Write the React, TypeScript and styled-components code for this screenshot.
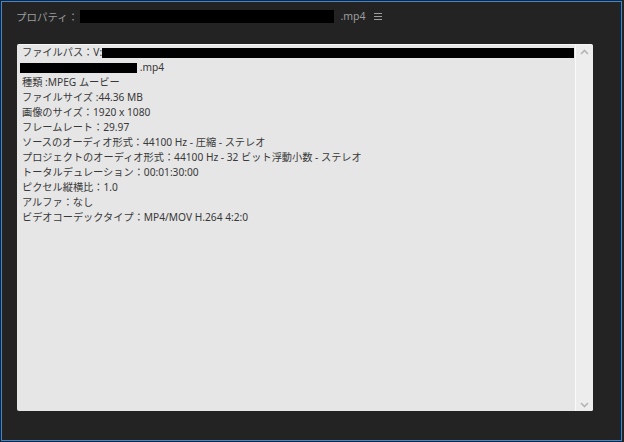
import styled, { createGlobalStyle } from "styled-components";

const GlobalStyle = createGlobalStyle`
  html, body {
    margin: 0;
    padding: 0;
    background: #232323;
  }
  body {
    width: 624px;
    height: 442px;
    overflow: hidden;
  }
`;

const Frame = styled.div`
  margin: 1px 0 0 1px;
  width: 621px;
  height: 440px;
  box-sizing: border-box;
  border: 1px solid #2f8ae8;
  background: #232323;
  display: flex;
  flex-direction: column;
  font-family: "Noto Sans", "Noto Sans CJK JP", sans-serif;
`;

const Header = styled.div`
  height: 28px;
  display: flex;
  align-items: center;
  padding: 0 0 0 14px;
  color: #9d9d9d;
  font-size: 10.5px;
`;

const Title = styled.span`
  margin-right: 2px;
`;

const Redact = styled.span<{ w: number; h: number }>`
  display: inline-block;
  width: ${(p) => p.w}px;
  height: ${(p) => p.h}px;
  background: #000;
  vertical-align: middle;
`;

const Ext = styled.span`
  margin-left: 6px;
`;

const Menu = styled.span`
  margin-left: 9px;
  display: flex;
  flex-direction: column;
  gap: 2px;
  & > i {
    display: block;
    width: 8px;
    height: 1px;
    background: #9d9d9d;
  }
`;

const Body = styled.div`
  flex: 1;
  padding: 14px 28px 29px 15px;
  display: flex;
`;

const Panel = styled.div`
  flex: 1;
  display: flex;
  background: #e6e6e6;
  border-top: 1px solid #f6f6f6;
  border-radius: 2px;
  overflow: hidden;
`;

const Content = styled.div`
  flex: 1;
  padding: 0 0 0 5px;
  color: #383838;
  font-size: 10.2px;
  line-height: 15px;
`;

const Line = styled.div`
  white-space: nowrap;
`;

const Scrollbar = styled.div`
  width: 17px;
  border-left: 1px solid #fafafa;
  background: #ededed;
  display: flex;
  flex-direction: column;
  justify-content: space-between;
  align-items: center;
  padding: 4px 0 3px;
`;

const Chevron = ({ up }: { up?: boolean }) => (
  <svg width="9" height="6" viewBox="0 0 9 6">
    <path
      d={up ? "M1 5 L4.5 1.5 L8 5" : "M1 1 L4.5 4.5 L8 1"}
      fill="none"
      stroke="#b4b4b4"
      strokeWidth="1.6"
    />
  </svg>
);

const rows = [
  "種類 :MPEG ムービー",
  "ファイルサイズ :44.36 MB",
  "画像のサイズ：1920 x 1080",
  "フレームレート：29.97",
  "ソースのオーディオ形式：44100 Hz - 圧縮 - ステレオ",
  "プロジェクトのオーディオ形式：44100 Hz - 32 ビット浮動小数 - ステレオ",
  "トータルデュレーション：00:01:30:00",
  "ピクセル縦横比：1.0",
  "アルファ：なし",
  "ビデオコーデックタイプ：MP4/MOV H.264 4:2:0",
];

export default function App() {
  return (
    <>
      <GlobalStyle />
      <Frame>
        <Header>
          <Title>プロパティ：</Title>
          <Redact w={254} h={13} />
          <Ext>.mp4</Ext>
          <Menu>
            <i />
            <i />
            <i />
          </Menu>
        </Header>
        <Body>
          <Panel>
            <Content>
              <Line>
                ファイルパス：V:
                <Redact w={472} h={10} />
              </Line>
              <Line>
                <Redact w={117} h={10} style={{ marginLeft: -2 }} /> .mp4
              </Line>
              {rows.map((r) => (
                <Line key={r}>{r}</Line>
              ))}
            </Content>
            <Scrollbar>
              <Chevron up />
              <Chevron />
            </Scrollbar>
          </Panel>
        </Body>
      </Frame>
    </>
  );
}
